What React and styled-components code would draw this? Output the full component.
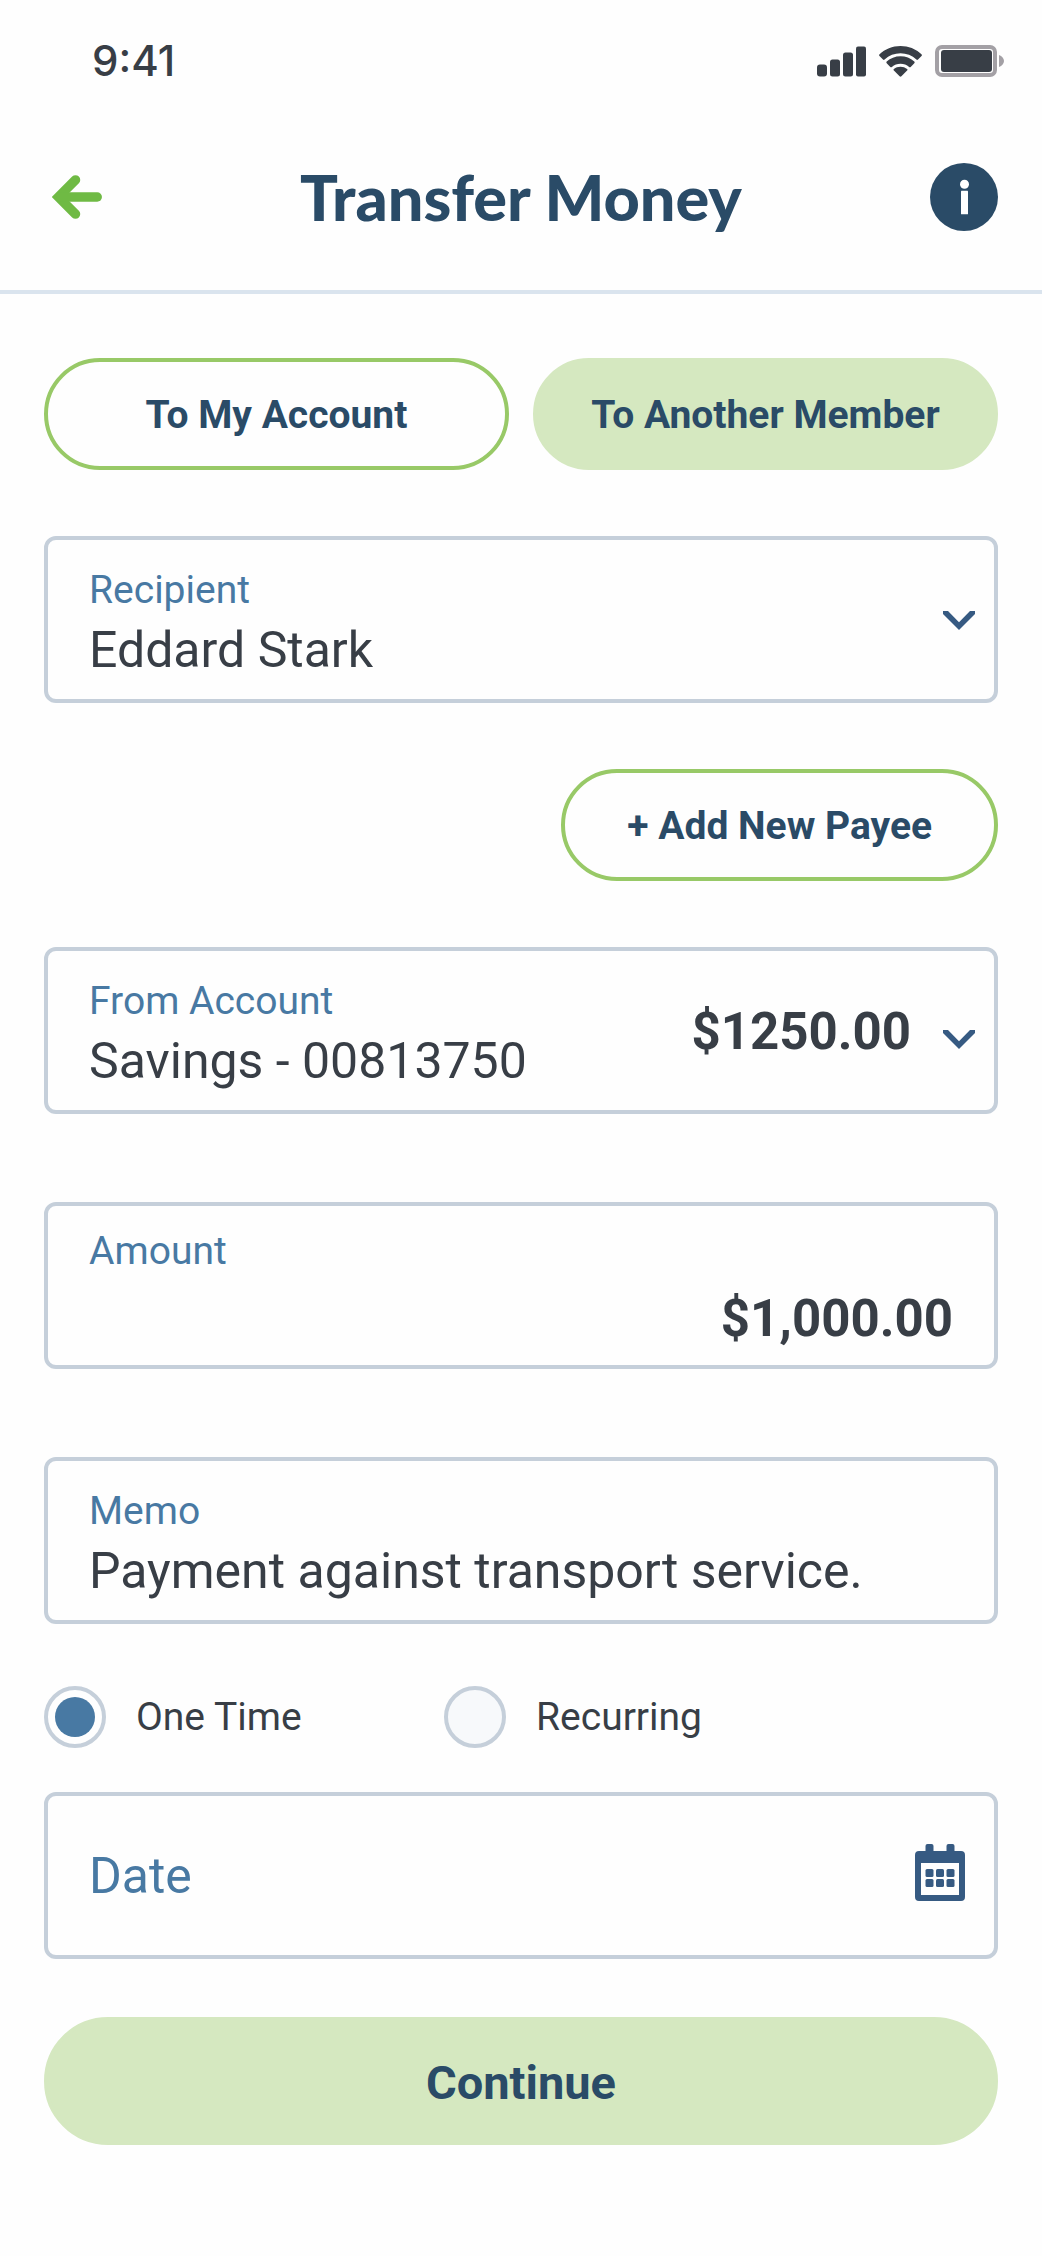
import React, { useState } from "react"
import styled, { createGlobalStyle } from "styled-components"

const colors = {
  page: "#fefefe",
  navy: "#2a4b67",
  ink: "#383e46",
  label: "#4879a3",
  icon: "#365a82",
  line: "#c5cfda",
  divider: "#dae4ee",
  green: "#98c967",
  paleGreen: "#d5e8c0",
  arrow: "#6fba44",
}

const GlobalStyle = createGlobalStyle`
  * {
    box-sizing: border-box;
  }
  body {
    margin: 0;
    background-color: ${colors.page};
    color: ${colors.ink};
    font-family: Roboto, "Liberation Sans", sans-serif;
  }
  button, input, select {
    font-family: inherit;
    color: inherit;
  }
`

const StatusBar = styled.div`
  display: flex;
  justify-content: space-between;
  align-items: center;
  height: 104px;
  padding: 18px 38px 0 92px;
`

const Time = styled.span`
  font-family: Inter, sans-serif;
  font-size: 42px;
  font-weight: 500;
  line-height: 50px;
`

const StatusIcons = styled.div`
  display: flex;
  align-items: center;
  gap: 13px;
`

const Header = styled.header`
  display: grid;
  grid-template-columns: 68px 1fr 68px;
  align-items: center;
  height: 190px;
  padding: 0 44px;
  border-bottom: 4px solid ${colors.divider};
`

const IconButton = styled.button`
  display: flex;
  padding: ${(props) => props.$padding || "0"};
  border: none;
  background: none;
  cursor: pointer;
`

const Title = styled.h1`
  margin: 0;
  color: ${colors.navy};
  font-family: Lato, "Open Sans", sans-serif;
  font-size: 63px;
  font-weight: 900;
  line-height: 72px;
  text-align: center;
`

const Form = styled.form`
  display: flex;
  flex-direction: column;
  padding: 64px 44px 111px;
`

const Tabs = styled.div`
  display: grid;
  grid-template-columns: 1fr 1fr;
  gap: 24px;
`

const Pill = styled.button`
  height: ${(props) => (props.$large ? "128px" : "112px")};
  padding: 2px 24px 0;
  border: 4px solid ${(props) => (props.$filled ? colors.paleGreen : colors.green)};
  border-radius: 64px;
  background-color: ${(props) => (props.$filled ? colors.paleGreen : "transparent")};
  color: ${colors.navy};
  font-size: ${(props) => (props.$large ? "47px" : "39px")};
  font-weight: 700;
  cursor: pointer;
`

const AddPayee = styled(Pill)`
  align-self: flex-end;
  margin-top: 66px;
  padding: 2px 62px 0;
`

const Continue = styled(Pill)`
  margin-top: 58px;
`

const Field = styled.div`
  display: flex;
  align-items: ${(props) => (props.$centered ? "center" : "flex-start")};
  min-height: 167px;
  margin-top: ${(props) => props.$top};
  padding: 0 19px 0 41px;
  border: 4px solid ${colors.line};
  border-radius: 12px;
`

const FieldBody = styled.div`
  flex: 1;
  min-width: 0;
  display: flex;
  flex-direction: column;
  gap: ${(props) => (props.$spread ? "12px" : "4px")};
  padding-top: ${(props) => (props.$spread ? "19px" : "24px")};
  padding-right: ${(props) => (props.$spread ? "22px" : "0")};
`

const Label = styled.label`
  color: ${colors.label};
  font-size: 39px;
  line-height: 52px;
`

const Select = styled.select`
  appearance: none;
  width: 100%;
  height: 60px;
  padding: 0;
  border: none;
  background: none;
  font-size: 50px;
  line-height: 60px;
`

const Input = styled.input`
  width: 100%;
  height: 60px;
  padding: 0;
  border: none;
  background: none;
  font-size: ${(props) => (props.$amount ? "51px" : "50px")};
  line-height: 60px;
  text-align: ${(props) => (props.$amount ? "right" : "left")};
  font-weight: ${(props) => (props.$amount ? 700 : 400)};

  &::placeholder {
    color: ${colors.label};
    opacity: 1;
  }
`

const FieldEnd = styled.div`
  align-self: center;
  display: flex;
  align-items: baseline;
  gap: 32px;
  padding-top: 2px;
`

const Balance = styled.strong`
  font-size: 51px;
  font-weight: 700;
  line-height: 60px;
`

const Frequency = styled.div`
  display: flex;
  margin-top: 62px;
  margin-bottom: 44px;
`

const Option = styled.label`
  display: flex;
  align-items: center;
  gap: 30px;
  min-width: 400px;
  font-size: 39px;
  line-height: 52px;
`

const Radio = styled.input`
  appearance: none;
  flex: none;
  width: 62px;
  height: 62px;
  margin: 0;
  border: 4px solid ${colors.line};
  border-radius: 50%;
  background-color: #f7f9fb;

  &:checked {
    padding: 7px;
    background-color: ${colors.label};
    background-clip: content-box;
  }
`

const Signal = () => (
  <svg width="49" height="31" viewBox="0 0 49 31" fill={colors.ink} aria-hidden="true">
    <rect x="0" y="18.5" width="10" height="12" rx="3" />
    <rect x="13" y="13.5" width="10" height="17" rx="2.5" />
    <rect x="26" y="6.5" width="10" height="24" rx="2.5" />
    <rect x="39" y="0.5" width="10" height="30" rx="2" />
  </svg>
)

const Wifi = () => (
  <svg width="43" height="31" viewBox="0 0 43 31" fill={colors.ink} aria-hidden="true">
    <path d="M21.5 0C13.4 0 6 3.2.5 8.3c-.5.5-.5 1.2 0 1.7l3.5 3.5c.5.5 1.1.5 1.6 0a23.2 23.2 0 0 1 31.8 0c.5.5 1.1.5 1.6 0l3.5-3.5c.5-.5.5-1.2 0-1.7A31 31 0 0 0 21.5 0z" />
    <path d="M21.5 10.3c-5.3 0-10.1 2-13.8 5.3-.5.5-.5 1.2 0 1.7l3.6 3.6c.5.5 1.1.5 1.6.1a12.9 12.9 0 0 1 17.2 0c.5.4 1.1.4 1.6-.1l3.6-3.6c.5-.5.5-1.2 0-1.7a20.7 20.7 0 0 0-13.8-5.3z" />
    <path d="M21.5 20.7c-2.5 0-4.8.9-6.6 2.3-.5.4-.5 1.1 0 1.6l5.7 5.7c.5.5 1.3.5 1.8 0l5.7-5.7c.5-.5.5-1.2 0-1.6a10.5 10.5 0 0 0-6.6-2.3z" />
  </svg>
)

const Battery = () => (
  <svg width="69" height="32" viewBox="0 0 69 32" aria-hidden="true">
    <rect x="2" y="2" width="58" height="28" rx="5" fill="none" stroke="#a3a0a5" strokeWidth="4" />
    <rect x="6" y="5" width="51" height="22" rx="3" fill={colors.ink} />
    <path d="M64 10c3 1 5 3.5 5 6s-2 5-5 6z" fill="#a3a0a5" />
  </svg>
)

const BackArrow = () => (
  <svg width="50" height="44" viewBox="0 0 50 44" fill="none" stroke={colors.arrow} strokeWidth="9.5" strokeLinecap="round" aria-hidden="true">
    <path d="M23.5 4.9L6.5 22l17 17.1" />
    <path d="M9 22h36.2" />
  </svg>
)

const InfoIcon = () => (
  <svg width="68" height="68" viewBox="0 0 68 68" aria-hidden="true">
    <circle cx="34" cy="34" r="34" fill={colors.navy} />
    <circle cx="34.5" cy="21.2" r="4.5" fill="#fff" />
    <rect x="31" y="27.7" width="7" height="23.5" rx="0.5" fill="#fff" />
  </svg>
)

const Chevron = () => (
  <svg width="32" height="19" viewBox="0 0 32 19" fill={colors.icon} aria-hidden="true">
    <path d="M0 0h5l11 11.3L27 0h5v3L16 19 0 3z" />
  </svg>
)

const Calendar = () => (
  <svg width="50" height="57" viewBox="0 0 50 57" fill={colors.icon} aria-hidden="true">
    <rect x="10.5" y="0" width="8" height="12" rx="2" />
    <rect x="31.5" y="0" width="8" height="12" rx="2" />
    <path fillRule="evenodd" d="M4 7h42a4 4 0 0 1 4 4v42a4 4 0 0 1-4 4H4a4 4 0 0 1-4-4V11a4 4 0 0 1 4-4zM6 19v32h38V19z" />
    {[10.5, 21, 31.5].map((x) => (
      <React.Fragment key={x}>
        <rect x={x} y="25" width="8" height="8" rx="1.5" />
        <rect x={x} y="35" width="8" height="8" rx="1.5" />
      </React.Fragment>
    ))}
  </svg>
)

export default () => {
  const [amount, setAmount] = useState("$1,000.00")
  const [memo, setMemo] = useState("Payment against transport service.")
  const [date, setDate] = useState("")
  const [frequency, setFrequency] = useState("once")
  return (
    <>
      <GlobalStyle />
      <StatusBar>
        <Time>9:41</Time>
        <StatusIcons>
          <Signal />
          <Wifi />
          <Battery />
        </StatusIcons>
      </StatusBar>
      <Header>
        <IconButton type="button" aria-label="Back" $padding="0 0 0 8px">
          <BackArrow />
        </IconButton>
        <Title>Transfer Money</Title>
        <IconButton type="button" aria-label="Info">
          <InfoIcon />
        </IconButton>
      </Header>
      <Form onSubmit={(e) => e.preventDefault()}>
        <Tabs>
          <Pill type="button">To My Account</Pill>
          <Pill type="button" $filled>To Another Member</Pill>
        </Tabs>
        <Field $top="66px">
          <FieldBody>
            <Label htmlFor="recipient">Recipient</Label>
            <Select id="recipient">
              <option>Eddard Stark</option>
            </Select>
          </FieldBody>
          <FieldEnd>
            <Chevron />
          </FieldEnd>
        </Field>
        <AddPayee type="button">+ Add New Payee</AddPayee>
        <Field $top="66px">
          <FieldBody>
            <Label htmlFor="from">From Account</Label>
            <Select id="from">
              <option>Savings - 00813750</option>
            </Select>
          </FieldBody>
          <FieldEnd>
            <Balance>$1250.00</Balance>
            <Chevron />
          </FieldEnd>
        </Field>
        <Field $top="88px">
          <FieldBody $spread>
            <Label htmlFor="amount">Amount</Label>
            <Input id="amount" $amount value={amount} onChange={(e) => setAmount(e.target.value)} />
          </FieldBody>
        </Field>
        <Field $top="88px">
          <FieldBody>
            <Label htmlFor="memo">Memo</Label>
            <Input id="memo" value={memo} onChange={(e) => setMemo(e.target.value)} />
          </FieldBody>
        </Field>
        <Frequency role="radiogroup" aria-label="Frequency">
          <Option>
            <Radio type="radio" name="frequency" checked={frequency === "once"} onChange={() => setFrequency("once")} />
            One Time
          </Option>
          <Option>
            <Radio type="radio" name="frequency" checked={frequency === "recurring"} onChange={() => setFrequency("recurring")} />
            Recurring
          </Option>
        </Frequency>
        <Field $top="0" $centered>
          <Input aria-label="Date" placeholder="Date" value={date} onChange={(e) => setDate(e.target.value)} />
          <IconButton type="button" aria-label="Choose date" $padding="0 10px 6px 0">
            <Calendar />
          </IconButton>
        </Field>
        <Continue type="submit" $filled $large>Continue</Continue>
      </Form>
    </>
  )
}
